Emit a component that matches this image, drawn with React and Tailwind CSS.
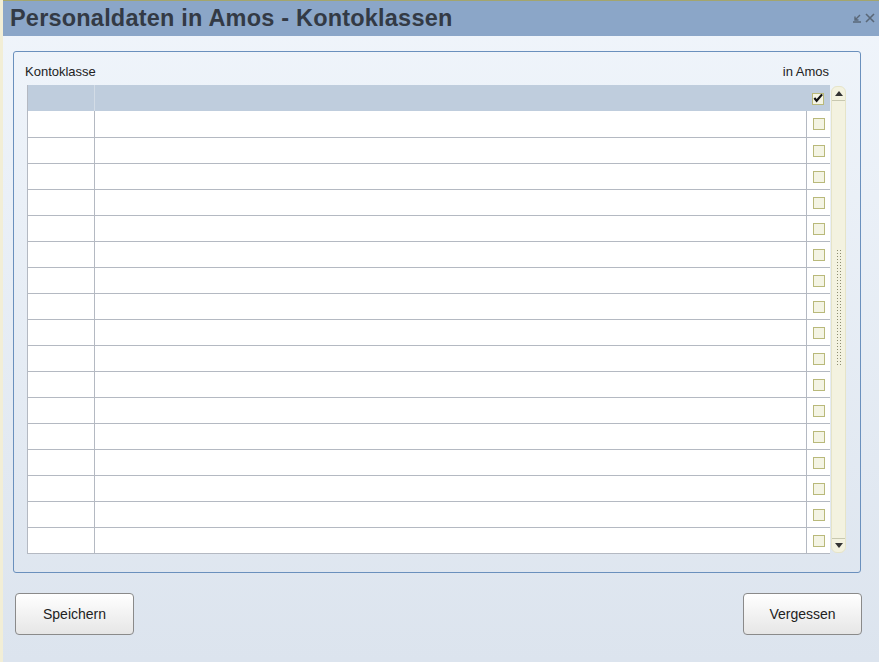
import React from "react";

function Check({ checked }) {
  return (
    <div className="w-[12px] h-[12px] border border-[#b9b97a] bg-[#f4f4e4] flex items-center justify-center">
      {checked && (
        <svg width="11" height="10" viewBox="0 0 11 10" className="-mt-[1px]">
          <path d="M1.5 5 L4 8 L10 1" stroke="#111" strokeWidth="2.4" fill="none" />
        </svg>
      )}
    </div>
  );
}

export default function App() {
  const rows = Array.from({ length: 17 });
  return (
    <div
      className="w-[879px] h-[662px] overflow-hidden flex flex-col bg-gradient-to-b from-[#f0f5fb] to-[#dce4ee] border-l-[3px] border-l-[#f2eed6]"
      style={{ fontFamily: '"Liberation Sans", Arial, sans-serif' }}
    >
      <div className="h-[36px] shrink-0 bg-[#8ba6c8] border-t border-t-[#a3a56e] flex items-center justify-between pr-[4px] -ml-[3px] pl-[10px]">
        <div className="text-[23.5px] font-bold text-[#333a45] tracking-[0.2px] leading-none">Personaldaten in Amos - Kontoklassen</div>
        <div className="flex items-center gap-[3px] -mt-[2px]">
          <svg width="10" height="10" viewBox="0 0 10 10">
            <path d="M8 2 L3 7 M3 3.5 L3 7 L6.5 7 M1 9 L9 9" stroke="#5a6878" strokeWidth="1.4" fill="none" />
          </svg>
          <svg width="10" height="10" viewBox="0 0 10 10">
            <path d="M1 1 L9 9 M9 1 L1 9" stroke="#5a6878" strokeWidth="1.6" fill="none" />
          </svg>
        </div>
      </div>
      <div className="flex-1 flex flex-col pl-[10px] pr-[18px] pt-[15px]">
        <div className="h-[522px] border border-[#6a90bd] rounded-[3px] flex flex-col pl-[13px] pr-[14px]">
          <div className="h-[33px] flex items-end justify-between pb-[4px] text-[13px] text-[#222]">
            <span className="-ml-[2px]">Kontoklasse</span>
            <span className="mr-[17px]">in Amos</span>
          </div>
          <div className="flex gap-[1px]">
            <div className="w-[803px] flex flex-col border-l border-b border-[#b4b9c2]">
              <div className="h-[26px] bg-[#bfcddd] flex">
                <div className="w-[67px] border-r border-[#d3dce6]" />
                <div className="flex-1" />
                <div className="w-[24px] flex items-center justify-center pt-[1px]">
                  <Check checked />
                </div>
              </div>
              {rows.map((_, i) => (
                <div key={i} className={`h-[26px] bg-white flex ${i > 0 ? "border-t border-[#b4b9c2]" : ""}`}>
                  <div className="w-[67px] border-r border-[#b4b9c2]" />
                  <div className="flex-1 border-r border-[#b4b9c2]" />
                  <div className="w-[23px] flex items-center justify-center">
                    <Check />
                  </div>
                </div>
              ))}
            </div>
            <div className="w-[15px] h-[467px] mt-[1px] rounded-[6px] bg-[#f3f2e0] border border-[#e6e4c8] flex flex-col justify-between items-center">
              <div className="w-full h-[14px] rounded-t-[6px] border-b border-[#c8c8b0] flex items-center justify-center">
                <svg width="8" height="5" viewBox="0 0 8 5"><path d="M0 5 L4 0 L8 5 Z" fill="#333" /></svg>
              </div>
              <div className="flex-1 flex items-center justify-center">
                <div className="w-[6px] h-[118px] bg-[radial-gradient(circle,#8c8c70_0.6px,transparent_0.9px)] bg-[length:3px_3px] -mt-[24px]" />
              </div>
              <div className="w-full h-[14px] rounded-b-[6px] border-t border-[#c8c8b0] flex items-center justify-center">
                <svg width="8" height="5" viewBox="0 0 8 5"><path d="M0 0 L4 5 L8 0 Z" fill="#333" /></svg>
              </div>
            </div>
          </div>
        </div>
        <div className="flex justify-between mt-[20px] ml-[2px] -mr-[1px]">
          <button className="w-[119px] h-[42px] rounded-[4px] border border-[#8a8a8a] bg-gradient-to-b from-white to-[#e6e6e6] text-[14px] text-[#222]">Speichern</button>
          <button className="w-[119px] h-[42px] rounded-[4px] border border-[#8a8a8a] bg-gradient-to-b from-white to-[#e6e6e6] text-[14px] text-[#222]">Vergessen</button>
        </div>
      </div>
    </div>
  );
}
